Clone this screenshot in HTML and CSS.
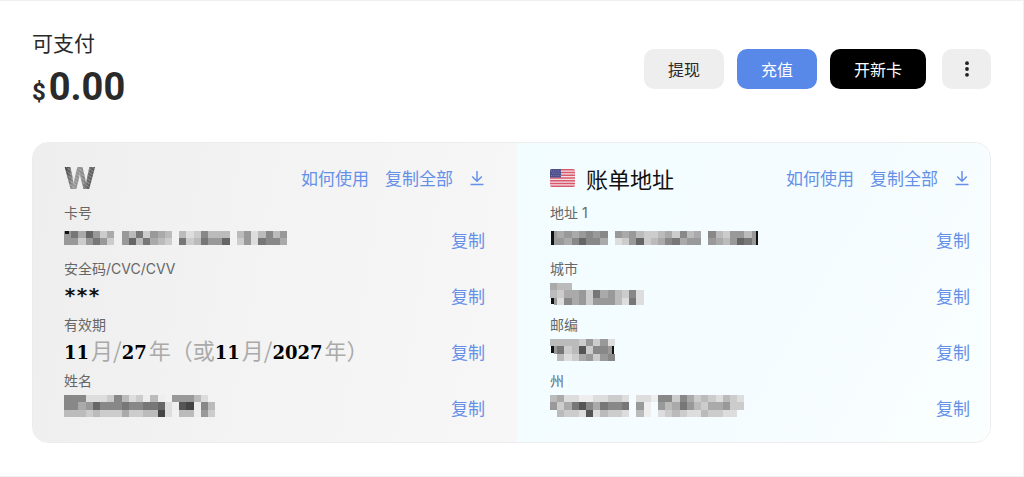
FILE: index.html
```
<!DOCTYPE html>
<html lang="zh-CN">
<head>
<meta charset="utf-8">
<title>可支付</title>
<link rel="stylesheet" href="styles.css">
</head>
<body>
<main class="page">
  <header class="top">
    <div class="balance">
      <div class="balance-label">可支付</div>
      <div class="balance-amount"><span class="currency">$</span><span>0.00</span></div>
    </div>
    <div class="buttons">
      <button class="btn" type="button">提现</button>
      <button class="btn btn-blue" type="button">充值</button>
      <button class="btn btn-black" type="button">开新卡</button>
      <button class="btn btn-more" type="button" aria-label="更多">
        <svg width="6" height="16" viewBox="0 0 6 16"><circle cx="3" cy="2.2" r="1.9"/><circle cx="3" cy="8" r="1.9"/><circle cx="3" cy="13.8" r="1.9"/></svg>
      </button>
    </div>
  </header>

  <section class="card">
    <div class="panel panel-card">
      <div class="panel-head">
        <span class="logo">W</span>
        <nav class="links">
          <a href="#">如何使用</a>
          <a href="#">复制全部</a>
          <a href="#" class="download" aria-label="下载"><svg width="16" height="16" viewBox="0 0 16 16"><path d="M8 1v10M3.2 6.5 8 11.2l4.8-4.7M1.5 14.5h13"/></svg></a>
        </nav>
      </div>
      <div class="field">
        <div class="label">卡号</div>
        <div class="row"><svg class="mosaic" data-rows="t7a69ca.9b7c9ab.bdc8bbb.b9db8b9|99c979c.96b7abc.7cb7996.c9d788a"></svg><a href="#">复制</a></div>
      </div>
      <div class="field">
        <div class="label">安全码/CVC/CVV</div>
        <div class="row"><span class="secret">***</span><a href="#">复制</a></div>
      </div>
      <div class="field">
        <div class="label">有效期</div>
        <div class="row"><span class="expiry"><b>11</b>月/<b>27</b>年（或<b>11</b>月/<b>2027</b>年）</span><a href="#">复制</a></div>
      </div>
      <div class="field">
        <div class="label">姓名</div>
        <div class="row"><svg class="mosaic" data-rows="888dddc8bdcebe.999bd|88a96888788776de54e8b|bbbcbcccaccbb4d.bbe9c"></svg><a href="#">复制</a></div>
      </div>
    </div>

    <div class="panel panel-address">
      <div class="panel-head">
        <h2 class="title">
          <svg width="25" height="18" viewBox="0 0 25 18">
            <clipPath id="flag"><rect width="25" height="18" rx="2"/></clipPath>
            <g clip-path="url(#flag)">
              <rect width="25" height="18" fill="#f3dfe4"/>
              <path d="M0 .7h25M0 3.5h25M0 6.25h25M0 9h25M0 11.8h25M0 14.5h25M0 17.3h25" stroke="#d8596c" stroke-width="1.5"/>
              <rect width="11" height="8.5" fill="#4c4f8c"/>
              <path d="M1 2h10M2 4.2h9M1 6.4h10" stroke="#8c8db8" stroke-width=".8" stroke-dasharray="1 1.2"/>
            </g>
          </svg>
          账单地址
        </h2>
        <nav class="links">
          <a href="#">如何使用</a>
          <a href="#">复制全部</a>
          <a href="#" class="download" aria-label="下载"><svg width="16" height="16" viewBox="0 0 16 16"><path d="M8 1v10M3.2 6.5 8 11.2l4.8-4.7M1.5 14.5h13"/></svg></a>
        </nav>
      </div>
      <div class="field">
        <div class="label">地址 1</div>
        <div class="row"><svg class="mosaic" data-rows="ha9a9898.9a9bccbac8ba.8bc99br|h9a8688a.dc96cba87a99.9ab967r"></svg><a href="#">复制</a></div>
      </div>
      <div class="field">
        <div class="label">城市</div>
        <div class="row"><svg class="mosaic" data-rows="abb|bcaa9c7a9bc8d|hd8a9c999bd7d"></svg><a href="#">复制</a></div>
      </div>
      <div class="field">
        <div class="label">邮编</div>
        <div class="row"><svg class="mosaic" data-rows="bbbbc9c9d|h7cb5c88r|.bdca9c98"></svg><a href="#">复制</a></div>
      </div>
      <div class="field">
        <div class="label">州</div>
        <div class="row"><svg class="mosaic" data-rows="baddeeddccd.dde88c8acbcdbcd|9ca758a7887.9e.9ba79bcaa9cc|.bccd5dbccd.be.dcbcddbccdd"></svg><a href="#">复制</a></div>
      </div>
    </div>
  </section>
</main>
<script src="mosaic.js"></script>
</body>
</html>
```
FILE: styles.css
```
* { box-sizing: border-box; }
body {
  margin: 0;
  background: #fff;
  color: #2a2a2a;
  font-family: "Noto Sans CJK SC", sans-serif;
}
a { color: #6590e8; text-decoration: none; }
.page {
  padding: 26px 32px 33px;
  border: 1px solid #f0f0f0;
  border-left: 0;
}
.top {
  display: flex;
  justify-content: space-between;
  align-items: flex-start;
  margin-bottom: 24px;
}
.balance-label { font-size: 21px; line-height: 30px; }
.balance-amount {
  display: flex;
  align-items: baseline;
  gap: 3px;
  margin-top: 4px;
  font: bold 38px/52px Roboto, sans-serif;
}
.currency { font-size: 24px; font-weight: 700; }
.buttons { display: flex; gap: 13px; align-items: center; padding-top: 22px; }
.btn {
  height: 40px;
  padding: 0 24px;
  border: 0;
  border-radius: 10px;
  background: #eee;
  color: #2a2a2a;
  font: 16px/24px "Noto Sans CJK SC", sans-serif;
}
.btn-blue { background: #5888e8; color: #fff; }
.btn-black { background: #000; color: #fff; }
.btn-more { display: grid; place-items: center; width: 49px; padding: 0; margin-left: 3px; }
.btn-more svg { fill: #222; }

.card {
  display: grid;
  grid-template-columns: 485fr 474fr;
  border: 1px solid #ececec;
  border-radius: 16px;
  overflow: hidden;
}
.panel { padding: 21px 32px 15px 31px; }
.panel-card { background: linear-gradient(100deg, #eee, #f3f3f3 45%, #f7f7f7); }
.panel-address {
  padding-left: 33px;
  padding-right: 20px;
  background: linear-gradient(120deg, #f2fdff, #f5fcff 55%, #fafffe);
}
.panel-head {
  display: flex;
  justify-content: space-between;
  align-items: center;
  height: 28px;
  margin-bottom: 11px;
}
.logo {
  font: 800 30px/28px Inter, sans-serif;
  color: transparent;
  background: repeating-linear-gradient(35deg, #fff3 0 1px, #0000 1px 3px), linear-gradient(100deg, #333, #999 35%, #888 60%, #333);
  background-clip: text;
  -webkit-background-clip: text;
}
.title {
  display: flex;
  align-items: center;
  gap: 11px;
  margin: 0;
  color: #111;
  font-size: 22px;
  font-weight: 400;
  line-height: 28px;
}
.links { display: flex; align-items: center; gap: 16px; font-size: 17px; line-height: 24px; }
.download svg { display: block; fill: none; stroke: #6590e8; stroke-width: 1.5; }
.field { height: 56px; }
.label { color: #666; font: 14px/20px Inter, "Noto Sans CJK SC", sans-serif; }
.row {
  display: flex;
  justify-content: space-between;
  align-items: center;
  height: 32px;
  font-size: 17px;
}
.mosaic { display: block; margin-bottom: 2px; }
.secret { color: #111; font: bold 20px/28px "DejaVu Sans Mono", monospace; }
.expiry { color: #aaa; font-size: 22px; line-height: 28px; white-space: nowrap; }
.expiry b { margin-right: 2px; color: #000; font: bold 18px/28px "DejaVu Serif", serif; }
```
FILE: mosaic.js
```
// Paints each masked value as rows of grey cells.
// "." is an empty cell; "h", "r" and "t" are grey cells with a dark
// sliver of the hidden glyph on the left, right or top-left.
const CELL_WIDTH = 7.2;
const CELL_HEIGHT = 7.4;
const SLIVERS = {
  h: [0.2, 0, 0.4, 0.9],
  r: [0.6, 0, 0.35, 1],
  t: [0.2, 0, 0.5, 0.35],
};

function addCell(svg, x, y, width, height, fill) {
  const cell = document.createElementNS("http://www.w3.org/2000/svg", "rect");
  Object.entries({ x, y, width, height, fill }).forEach(([k, v]) => cell.setAttribute(k, v));
  svg.append(cell);
}

document.querySelectorAll(".mosaic").forEach((svg) => {
  const rows = svg.dataset.rows.split("|");
  const cols = Math.max(...rows.map((r) => r.length));
  svg.setAttribute("viewBox", `0 0 ${cols} ${rows.length}`);
  svg.setAttribute("preserveAspectRatio", "none");
  svg.setAttribute("width", cols * CELL_WIDTH);
  svg.setAttribute("height", rows.length * CELL_HEIGHT);
  svg.setAttribute("shape-rendering", "crispEdges");
  rows.forEach((row, y) => [...row].forEach((tone, x) => {
    if (tone === ".") return;
    const sliver = SLIVERS[tone];
    if (!sliver) {
      addCell(svg, x, y, 1, 1, "#" + tone.repeat(3));
      return;
    }
    addCell(svg, tone === "h" ? x + 0.5 : x, y, tone === "t" ? 1 : 0.6, 1, "#999");
    addCell(svg, x + sliver[0], y + sliver[1], sliver[2], sliver[3], "#111");
  }));
});
```
